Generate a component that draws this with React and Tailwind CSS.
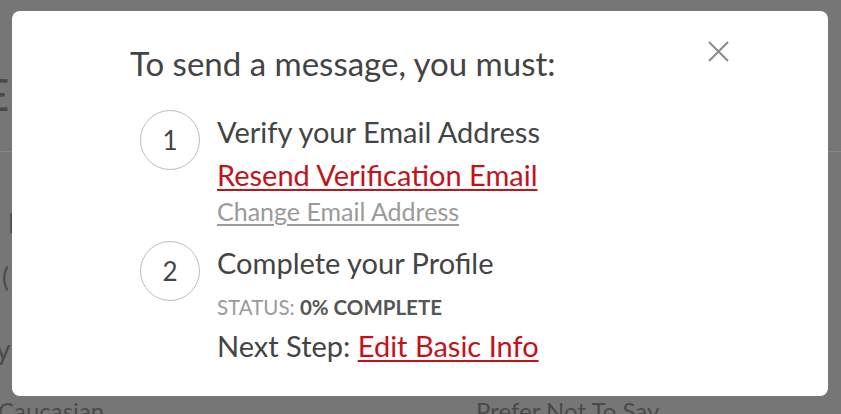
import React from 'react';

const font = { fontFamily: 'Lato, "Open Sans", sans-serif' };

function StepCircle({ n }) {
  return (
    <div className="w-[60px] h-[60px] shrink-0 rounded-full border-[1.5px] border-[#bdbdbd] flex items-center justify-center text-[26px] text-[#444]">
      {n}
    </div>
  );
}

function CloseIcon() {
  return (
    <svg width="21" height="21" viewBox="0 0 21 21" fill="none" stroke="#8a8a8a" strokeWidth="2">
      <path d="M1 1L20 20M20 1L1 20" />
    </svg>
  );
}

export default function App() {
  return (
    <div className="relative w-[841px] h-[414px] overflow-hidden bg-[#767676] text-[#4a4a4a]" style={font}>
      {/* page behind the overlay */}
      <div className="flex flex-col">
        <div className="h-[152px] border-b border-[#858585] pt-[66px]">
          <div className="-ml-[16px] text-[44px] leading-[56px]">E</div>
        </div>
        <div className="h-[246px] flex flex-col">
          <div className="pl-[8px] pt-[56px] text-[26px] leading-[30px]">I</div>
          <div className="pl-[2px] pt-[24px] text-[26px] leading-[30px]">(</div>
          <div className="-ml-[4px] pt-[40px] text-[28px] leading-[34px]">y</div>
        </div>
        <div className="flex text-[24px] leading-[30px] -mt-[2px]">
          <div className="w-[478px] -ml-[2px]">Caucasian</div>
          <div>Prefer Not To Say</div>
        </div>
      </div>

      {/* modal */}
      <div className="absolute left-[12px] top-[11px] w-[816px] h-[385px] rounded-[8px] bg-white">
        <button className="absolute right-[99px] top-[30px] p-0">
          <CloseIcon />
        </button>
        <div className="pl-[118px] pt-[32px]">
          <h2 className="text-[33px] leading-[40px] text-[#444]">To send a message, you must:</h2>

          <div className="mt-[27px] flex flex-col gap-[15px]">
            <div className="flex items-start pl-[10px] gap-[17px]">
              <StepCircle n="1" />
              <div className="flex flex-col text-[29px]">
                <div className="leading-[43px] text-[#444]">Verify your Email Address</div>
                <a href="#" className="leading-[43px] text-[#c4121a] underline underline-offset-[3px] decoration-[1.5px]">
                  Resend Verification Email
                </a>
                <a href="#" className="text-[25px] leading-[30px] text-[#9a9a9a] underline underline-offset-[3px]">
                  Change Email Address
                </a>
              </div>
            </div>

            <div className="flex items-start pl-[10px] gap-[17px]">
              <StepCircle n="2" />
              <div className="flex flex-col text-[29px]">
                <div className="leading-[43px] text-[#444]">Complete your Profile</div>
                <div className="mt-[8px] text-[20.5px] leading-[30px] text-[#9a9a9a]">
                  STATUS: <span className="font-bold text-[#555]">0% COMPLETE</span>
                </div>
                <div className="leading-[47px] text-[#444]">
                  Next Step:{' '}
                  <a href="#" className="text-[#c4121a] underline underline-offset-[3px] decoration-[1.5px]">
                    Edit Basic Info
                  </a>
                </div>
              </div>
            </div>
          </div>
        </div>
      </div>
    </div>
  );
}
